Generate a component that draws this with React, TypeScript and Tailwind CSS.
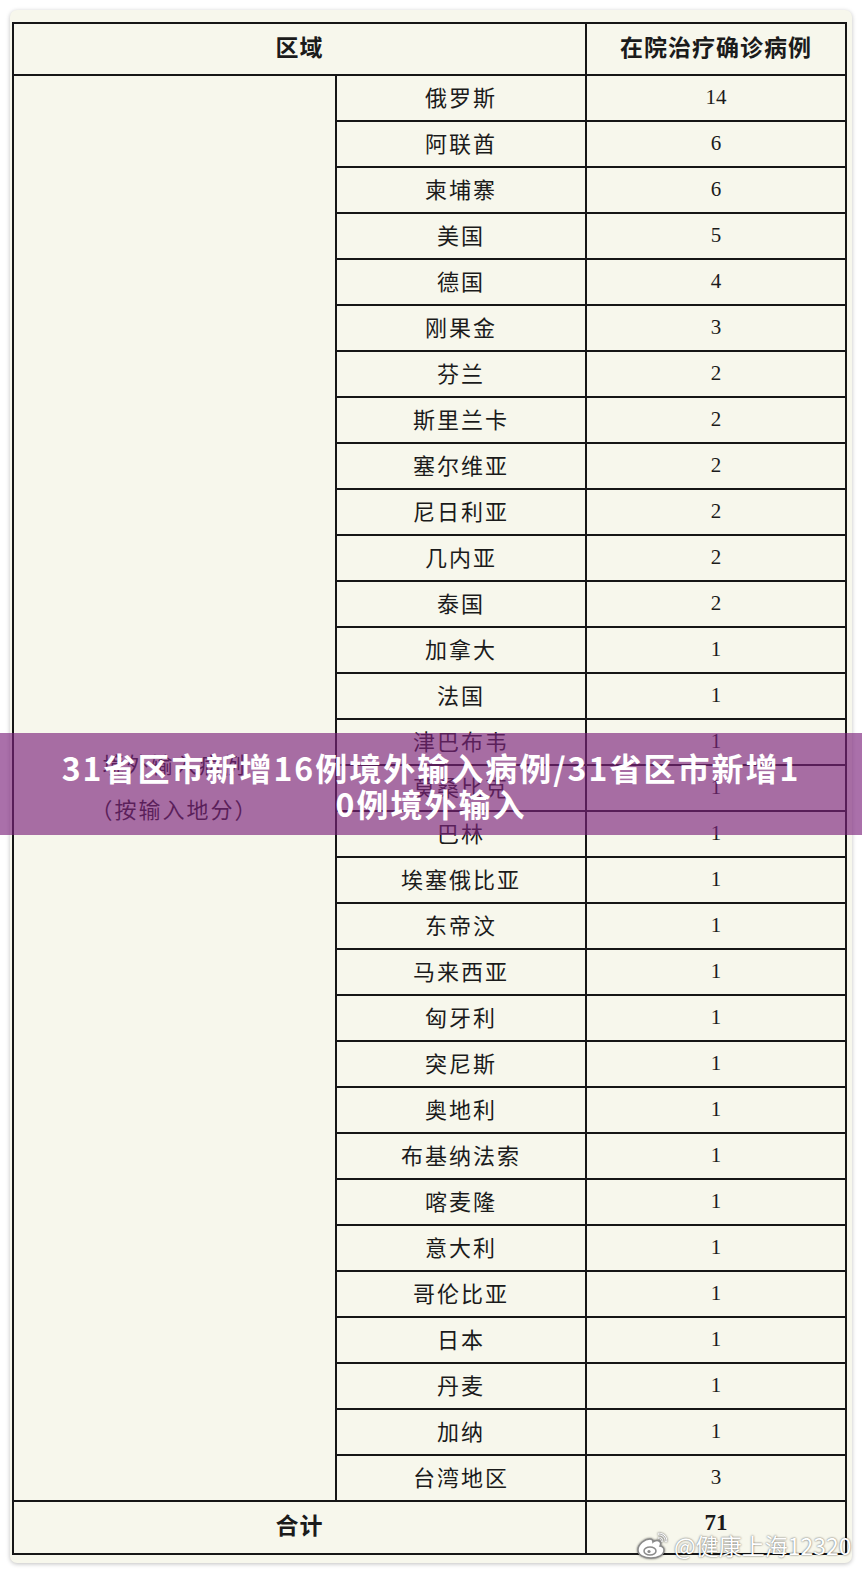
import React from 'react';

const rows: [string, number][] = [
    ['俄罗斯', 14],
    ['阿联酋', 6],
    ['柬埔寨', 6],
    ['美国', 5],
    ['德国', 4],
    ['刚果金', 3],
    ['芬兰', 2],
    ['斯里兰卡', 2],
    ['塞尔维亚', 2],
    ['尼日利亚', 2],
    ['几内亚', 2],
    ['泰国', 2],
    ['加拿大', 1],
    ['法国', 1],
    ['津巴布韦', 1],
    ['莫桑比克', 1],
    ['巴林', 1],
    ['埃塞俄比亚', 1],
    ['东帝汶', 1],
    ['马来西亚', 1],
    ['匈牙利', 1],
    ['突尼斯', 1],
    ['奥地利', 1],
    ['布基纳法索', 1],
    ['喀麦隆', 1],
    ['意大利', 1],
    ['哥伦比亚', 1],
    ['日本', 1],
    ['丹麦', 1],
    ['加纳', 1],
    ['台湾地区', 3],
];

const cell = 'border-2 border-[#161616] text-center align-middle';

const WeiboIcon = () => (
    <svg width="36" height="30" viewBox="0 0 36 30" className="[filter:drop-shadow(0_0_1px_rgba(0,0,0,0.6))]">
        <path
            d="M14 9c-5 0-12 5-12 11 0 5 6 8 13 8s13-3 13-8c0-3-3-4-4-4 1-2 1-4-1-5-2-1-5 0-6 1 0-2-1-3-3-3z"
            fill="#fff"
            stroke="#8a8a8a"
            strokeWidth="1.5"
        />
        <ellipse cx="14" cy="21" rx="6" ry="4" fill="none" stroke="#8a8a8a" strokeWidth="1.5" />
        <circle cx="13" cy="21.5" r="1.6" fill="#8a8a8a" />
        <path d="M23 4c4 0 7 3 7 7" fill="none" stroke="#fff" strokeWidth="2.5" strokeLinecap="round" />
        <path d="M23 4c4 0 7 3 7 7" fill="none" stroke="#8a8a8a" strokeWidth="0.8" strokeLinecap="round" />
        <path d="M23 8c2 0 3 1 3 3" fill="none" stroke="#fff" strokeWidth="2.2" strokeLinecap="round" />
        <path d="M23 8c2 0 3 1 3 3" fill="none" stroke="#8a8a8a" strokeWidth="0.8" strokeLinecap="round" />
    </svg>
);

export default function App() {
    return (
        <div className="relative min-h-[1572px] w-[862px] bg-white px-[10px] pt-[10px] font-['Liberation_Serif','Noto_Sans_CJK_SC',serif] text-[#1b1b1b]">
            {/* card */}
            <div className="rounded-[7px] bg-[#f7f7ec] pb-[8px] pl-[2px] pr-[7px] pt-[12px] shadow-[0_1px_4px_rgba(0,0,0,0.25)]">
                <table className="w-[833px] table-fixed border-collapse border-2 border-[#161616]">
                    <colgroup>
                        <col className="w-[323px]" />
                        <col className="w-[250px]" />
                        <col className="w-[260px]" />
                    </colgroup>
                    <thead>
                        <tr className="h-[52px]">
                            <th colSpan={2} className={`${cell} text-[23px] font-bold tracking-[1px]`}>区域</th>
                            <th className={`${cell} text-[23px] font-bold tracking-[1px]`}>在院治疗确诊病例</th>
                        </tr>
                    </thead>
                    <tbody>
                        {rows.map(([name, n], i) => (
                            <tr key={i} className="h-[46px]">
                                {i === 0 && (
                                    <td rowSpan={rows.length} className={`${cell} text-[22px] leading-[45px] tracking-[2px]`}>
                                        <div>境外输入病例</div>
                                        <div>（按输入地分）</div>
                                    </td>
                                )}
                                <td className={`${cell} text-[22px] tracking-[2px]`}>{name}</td>
                                <td className={`${cell} text-[21px]`}>{n}</td>
                            </tr>
                        ))}
                        <tr className="h-[53px]">
                            <td colSpan={2} className={`${cell} text-[23px] font-bold tracking-[1px]`}>合计</td>
                            <td className={`${cell} pb-[8px] text-[23px] font-bold`}>71</td>
                        </tr>
                    </tbody>
                </table>
            </div>

            {/* title banner over the table */}
            <div className="absolute left-0 right-0 top-[733px] flex h-[102px] items-center justify-center bg-[#7d247c]/65">
                <p className="pt-[2px] text-center font-['Noto_Sans_CJK_SC',sans-serif] text-[32px] font-bold leading-[36px] tracking-[2px] text-white">
                    31省区市新增16例境外输入病例/31省区市新增1
                    <br />
                    0例境外输入
                </p>
            </div>

            {/* watermark */}
            <div className="absolute left-[636px] top-[1530px] flex items-center gap-[2px]">
                <WeiboIcon />
                <span className="font-['Noto_Sans_CJK_SC',sans-serif] text-[23px] leading-[30px] text-white [text-shadow:0_0_2px_rgba(0,0,0,0.7)]">
                    @健康上海12320
                </span>
            </div>
        </div>
    );
}
